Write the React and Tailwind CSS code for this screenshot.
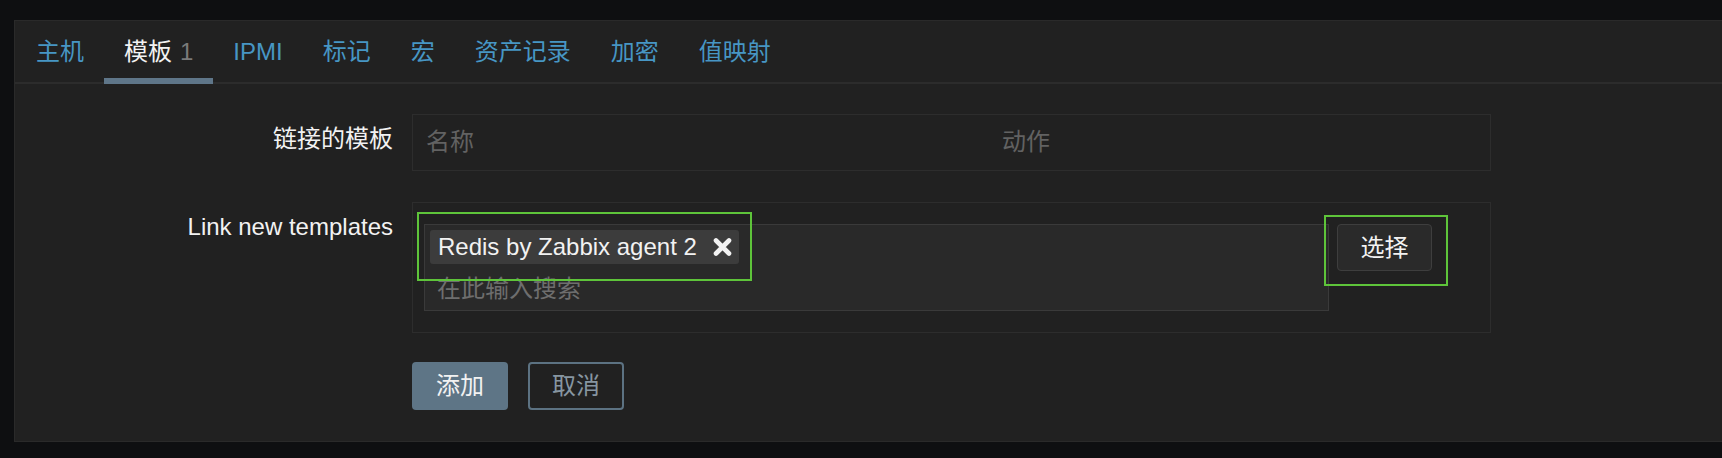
import React from 'react';

const tabs = [
  { label: '主机' },
  { label: '模板', count: '1', active: true },
  { label: 'IPMI' },
  { label: '标记' },
  { label: '宏' },
  { label: '资产记录' },
  { label: '加密' },
  { label: '值映射' },
];

const CloseIcon = () => (
  <svg width="19" height="18" viewBox="0 0 19 18" className="shrink-0">
    <path d="M3 2.5 L16 15.5 M16 2.5 L3 15.5" stroke="#f2f2f2" strokeWidth="4.6" strokeLinecap="round" />
  </svg>
);

const App = () => {
  return (
    <div
      className="h-[458px] w-[1722px] overflow-hidden bg-[#0e0f11] pt-[20px] pl-[14px] text-[24px]"
      style={{ fontFamily: '"Liberation Sans", Arial, "Noto Sans CJK SC", sans-serif' }}
    >
      <div className="relative border border-r-0 border-[#2a2a2a] bg-[#212121] pb-[31px]">
        {/* tab bar */}
        <div className="flex border-b-2 border-[#2c2c2c] pl-px">
          {tabs.map((t) => (
            <div
              key={t.label}
              className="relative flex h-[61px] items-center px-[20px] leading-[28px]"
            >
              <span className={t.active ? 'text-[#f2f2f2]' : 'text-[#4796c4]'}>{t.label}</span>
              {t.count && <span className="ml-[8px] text-[#7a7a7a]">{t.count}</span>}
              {t.active && (
                <span className="absolute left-0 right-0 -bottom-[2px] h-[6px] bg-[#5f7689]" />
              )}
            </div>
          ))}
        </div>

        {/* form */}
        <div className="grid grid-cols-[378px_1079px] gap-x-[19px] gap-y-[31px] pt-[30px]">
          <div className="pt-[11px] text-right leading-[28px] text-[#f2f2f2]">链接的模板</div>
          <div className="grid grid-cols-[576px_1fr] border border-[#2d2d2d] leading-[28px] text-[#626262]">
            <div className="px-[13px] pt-[13px] pb-[14px]">名称</div>
            <div className="px-[13px] pt-[13px] pb-[14px]">动作</div>
          </div>

          <div className="pt-[11px] text-right leading-[28px] text-[#f2f2f2]">Link new templates</div>
          <div className="flex items-start border border-[#2d2d2d] px-[11px] py-[21px]">
            <div className="w-[905px] border border-[#3a3a3a] bg-[#292929] p-[5px]">
              <div className="flex">
                <div className="flex h-[34px] items-center gap-[16px] rounded-[3px] bg-[#3c3c3c] pl-[8px] pr-[7px] leading-[28px] text-[#f2f2f2]">
                  <span>Redis by Zabbix agent 2</span>
                  <CloseIcon />
                </div>
              </div>
              <div className="pl-[7px] pt-[11px] pb-[2px] leading-[28px] text-[#6e6e6e]">在此输入搜索</div>
            </div>
            <button className="ml-[8px] flex h-[47px] w-[95px] items-center justify-center rounded-[4px] border border-[#3e3e3e] bg-[#2a2a2a] leading-[28px] text-[#f2f2f2]">
              选择
            </button>
          </div>

          <div />
          <div className="-mt-[2px] flex gap-[20px]">
            <button className="flex h-[48px] w-[96px] items-center justify-center rounded-[4px] bg-[#5e7586] leading-[28px] text-[#f2f2f2]">
              添加
            </button>
            <button className="flex h-[48px] w-[96px] items-center justify-center rounded-[4px] border-2 border-[#5c7282] leading-[28px] text-[#8796a1]">
              取消
            </button>
          </div>
        </div>

        {/* annotation highlights */}
        <div className="pointer-events-none absolute left-[402px] top-[191px] h-[69px] w-[335px] border-2 border-[#5ec43a]" />
        <div className="pointer-events-none absolute left-[1309px] top-[194px] h-[71px] w-[124px] border-2 border-[#5ec43a]" />
      </div>
    </div>
  );
};

export default App;
